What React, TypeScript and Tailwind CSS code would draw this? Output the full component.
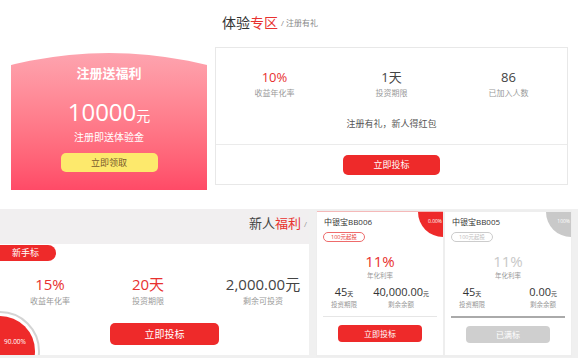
import React from 'react';

const font = "font-['Open_Sans','Noto_Sans_CJK_SC',sans-serif]";

function Stat({ value, label, red }: { value: React.ReactNode; label: string; red?: boolean }) {
  return (
    <div className="flex flex-col items-center">
      <div className={`text-[13px] leading-[16px] ${red ? 'text-[#e8312f]' : 'text-[#444]'}`}>{value}</div>
      <div className="mt-[3px] text-[8px] leading-[10px] text-[#999]">{label}</div>
    </div>
  );
}

function ProductCard({ name, done, percent, remain }: { name: string; done?: boolean; percent: string; remain: string }) {
  return (
    <div className={`relative w-[126px] h-[144px] bg-white overflow-hidden border-t ${done ? 'border-[#eee]' : 'border-[#f5b9b9]'}`}>
      <div className={`absolute right-0 top-0 w-[25px] h-[25px] rounded-bl-full ${done ? 'bg-[#c9c9c9]' : 'bg-[#ee2a2a]'}`}>
        <span className="absolute right-[1px] top-[6px] text-[5px] leading-[6px] text-white">{percent}</span>
      </div>
      <div className="pl-[7px] pt-[5px] text-[8px] leading-[10px] text-[#333]">{name}</div>
      <div className={`ml-[6px] mt-[5px] w-[42px] h-[10px] rounded-full border flex items-center justify-center text-[5.5px] leading-[6px] ${done ? 'border-[#ccc] text-[#bbb]' : 'border-[#ee6b6b] text-[#e8312f]'}`}>
        100元起投
      </div>
      <div className={`mt-[11px] text-center text-[15px] leading-[17px] ${done ? 'text-[#c8c8c8]' : 'text-[#e8312f]'}`}>11%</div>
      <div className="mt-[2px] text-center text-[6.5px] leading-[8px] text-[#999]">年化利率</div>
      <div className="mt-[6px] flex justify-between px-[14px]">
        <div className="flex flex-col items-center">
          <div className="text-[11px] leading-[12px] text-[#333]">45<span className="text-[6px]">天</span></div>
          <div className="mt-[1px] text-[6.5px] leading-[8px] text-[#999]">投资期限</div>
        </div>
        <div className="flex flex-col items-center">
          <div className="text-[11px] leading-[12px] text-[#333]">{remain}<span className="text-[6px]">元</span></div>
          <div className="mt-[1px] text-[6.5px] leading-[8px] text-[#999]">剩余余额</div>
        </div>
      </div>
      <div className={`mx-[6px] mt-[7px] ${done ? 'h-[2px] bg-[#aaa]' : 'h-px bg-[#e6e6e6]'}`} />
      <div className="mt-[8px] flex justify-center">
        <div className={`w-[84px] h-[17px] rounded-[4px] flex items-center justify-center text-[8px] text-white ${done ? 'bg-[#cfcfcf]' : 'bg-[#ee2a2a]'}`}>
          {done ? '已满标' : '立即投标'}
        </div>
      </div>
    </div>
  );
}

export default function App() {
  return (
    <div className={`w-[578px] h-[358px] bg-white overflow-hidden ${font}`}>
      {/* top: 体验专区 */}
      <div className="flex h-[209px]">
        <div className="w-[215px] pl-[11px] pt-[53px]">
          <div className="w-[196px] h-[137px] bg-linear-to-b from-[#fda4af] to-[#ff4a67] [clip-path:circle(406px_at_50%_406px)] flex flex-col items-center text-white">
            <div className="mt-[11px] text-[13px] leading-[18px] font-bold">注册送福利</div>
            <div className="mt-[16px] text-[24px] leading-[28px]">10000<span className="text-[14px]">元</span></div>
            <div className="mt-[1px] text-[10px] leading-[12px]">注册即送体验金</div>
            <div className="mt-[10px] w-[97px] h-[19px] rounded-[5px] bg-[#fde96c] flex items-center justify-center text-[9px] text-[#7a5b2c]">立即领取</div>
          </div>
        </div>
        <div className="flex-1 pr-[10px]">
          <div className="h-[47px] pl-[7px] flex items-center pb-[2px]">
            <span className="text-[14px] text-[#333]">体验</span>
            <span className="text-[14px] text-[#e8312f]">专区</span>
            <span className="ml-[3px] text-[8px] text-[#888]">/ 注册有礼</span>
          </div>
          <div className="w-[353px] h-[138px] border border-[#e8e8e8] flex flex-col">
            <div className="h-[96px] flex flex-col">
              <div className="mt-[21px] grid grid-cols-3">
                <Stat value="10%" label="收益年化率" red />
                <Stat value="1天" label="投资期限" />
                <Stat value="86" label="已加入人数" />
              </div>
              <div className="mt-[20px] text-center text-[9px] leading-[12px] text-[#555]">注册有礼，新人得红包</div>
            </div>
            <div className="h-px bg-[#ebebeb]" />
            <div className="flex-1 flex justify-center pt-[10px]">
              <div className="w-[97px] h-[20px] rounded-[5px] bg-[#ee2a2a] flex items-center justify-center text-[9px] text-white">立即投标</div>
            </div>
          </div>
        </div>
      </div>

      {/* bottom: 新人福利 */}
      <div className="flex h-[149px] bg-[#f0f0f0]">
        <div className="w-[309px] flex flex-col">
          <div className="h-[35px] bg-[#f1eff0] flex items-center justify-end pr-[2px] pb-[6px]">
            <span className="text-[13px] text-[#444]">新人</span>
            <span className="text-[13px] text-[#e8312f]">福利</span>
            <span className="ml-[3px] text-[8px] text-[#999]">/</span>
          </div>
          <div className="relative h-[111px] bg-white overflow-hidden">
            <div className="mt-[1px] w-[56px] h-[16px] rounded-r-full bg-[#ee2a2a] flex items-center pl-[12px] text-[9px] text-white">新手标</div>
            <div className="mt-[14px] flex">
              <div className="w-[100px] flex flex-col items-center">
                <div className="text-[15px] leading-[18px] text-[#e8312f]">15%</div>
                <div className="mt-[3px] text-[8px] leading-[10px] text-[#999]">收益年化率</div>
              </div>
              <div className="w-[96px] flex flex-col items-center">
                <div className="text-[15px] leading-[18px] text-[#e8312f]">20天</div>
                <div className="mt-[3px] text-[8px] leading-[10px] text-[#999]">投资期限</div>
              </div>
              <div className="ml-[21px] w-[92px] flex flex-col items-center">
                <div className="text-[15px] leading-[18px] text-[#444] whitespace-nowrap">2,000.00元</div>
                <div className="mt-[3px] text-[8px] leading-[10px] text-[#999]">剩余可投资</div>
              </div>
            </div>
            <div className="mt-[17px] pl-[110px]">
              <div className="w-[109px] h-[22px] rounded-[5px] bg-[#ee2a2a] flex items-center justify-center text-[10px] text-white">立即投标</div>
            </div>
            <div className="absolute -left-[40px] -bottom-[36px] w-[80px] h-[80px] rounded-full border-[2px] border-[#d4d4d4] bg-white flex items-center justify-center">
              <div className="w-[70px] h-[70px] rounded-full bg-[#ee2a2a]" />
            </div>
            <span className="absolute left-[4px] bottom-[9px] text-[6.5px] leading-[8px] text-white">90.00%</span>
          </div>
        </div>
        <div className="ml-[7px] mt-[1px] flex gap-[2px] p-[1px] bg-[#eeeeee] h-[147px]">
          <ProductCard name="中银宝BB006" percent="0.00%" remain="40,000.00" />
          <ProductCard name="中银宝BB005" percent="100%" remain="0.00" done />
        </div>
      </div>
    </div>
  );
}
